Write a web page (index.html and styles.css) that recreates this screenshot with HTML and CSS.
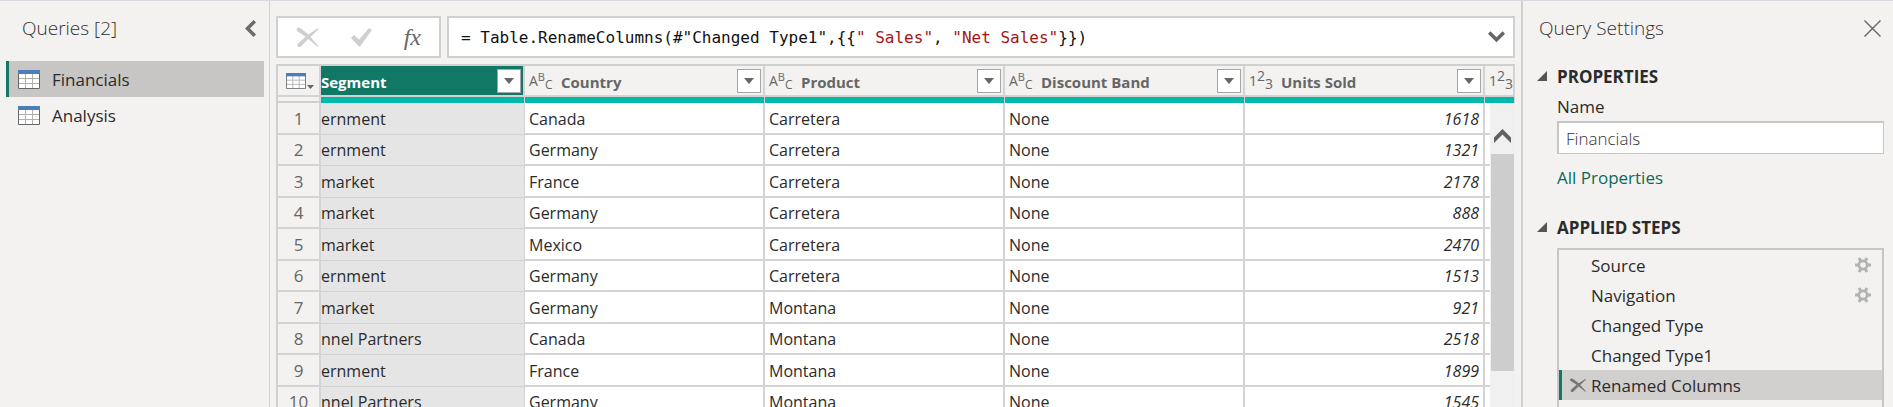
FILE: index.html
```html
<!DOCTYPE html>
<html lang="en">
<head>
<meta charset="utf-8">
<title>Query Editor</title>
<link rel="stylesheet" href="styles.css">
</head>
<body>
<svg class="defs" aria-hidden="true">
  <symbol id="grid" viewBox="0 0 22 19">
    <path fill="#fff" d="M0 0h22v19H0z"/>
    <path fill="none" stroke="#b0b0b0" d="M7.500 4v14M14.500 4v14M1 8.500h20M1 13.500h20"/>
    <path fill="none" stroke="#666" d="M.5 3v15.500h21V3"/>
    <path fill="#4a7ebb" d="M0 0h22v4H0z"/>
  </symbol>
  <symbol id="gear" viewBox="0 0 16 16">
    <path fill="none" stroke="#b3b3b3" stroke-width="3" d="M0 8h16M4 1l8 14M12 1L4 15"/>
    <circle cx="8" cy="8" r="5.500" fill="#b3b3b3"/>
    <circle cx="8" cy="8" r="2.800" fill="#f3f2f0"/>
  </symbol>
  <symbol id="brush-x" viewBox="0 0 22 20">
    <path d="M0 2.500C0 .5 3 0 4.500 1.500L12 7.500 21.500 1 22 2.300 14 10l8 9-1 .8L11.800 12 4.500 19.500C3 21 0 19.500 1 17L9 9.700 1 4.300C.3 3.800 0 3.200 0 2.500z"/>
  </symbol>
</svg>
<div class="app">
  <aside class="queries">
    <header class="pane-head">
      <h2 class="pane-title">Queries [2]</h2>
      <button class="icon-btn" aria-label="Collapse"><svg width="11" height="17" viewBox="0 0 11 17"><path fill="none" stroke="#6b6b6b" stroke-width="3.500" d="M9.800 1.200L2.500 8.500l7.300 7.300"/></svg></button>
    </header>
    <nav class="query-list">
      <button class="query selected"><svg width="22" height="19"><use href="#grid"/></svg>Financials</button>
      <button class="query"><svg width="22" height="19"><use href="#grid"/></svg>Analysis</button>
    </nav>
  </aside>

  <main class="editor">
    <div class="formula-bar">
      <div class="formula-tools">
        <button class="icon-btn" aria-label="Cancel"><svg width="23" height="20" viewBox="0 0 22 20" fill="#cfcfcf"><use href="#brush-x"/></svg></button>
        <button class="icon-btn" aria-label="Commit"><svg width="21" height="19" viewBox="0 0 21 19"><path fill="#cfcfcf" d="M0 10l3-3 5 4.500L18 0l3 2L9 18.500H8z"/></svg></button>
        <button class="icon-btn fx" aria-label="Insert step">fx</button>
      </div>
      <div class="formula">
        <code class="code">= Table.RenameColumns(#"Changed Type1",{{<span class="str">" Sales"</span>, <span class="str">"Net Sales"</span>}})</code>
        <button class="icon-btn" aria-label="Expand formula"><svg width="17" height="12" viewBox="0 0 17 12"><path fill="none" stroke="#666" stroke-width="3.500" d="M1.200 1.500l7.300 7.300 7.300-7.300"/></svg></button>
      </div>
    </div>

    <div class="grid">
      <table class="data">
        <colgroup><col class="c-num"><col class="c-seg"><col class="c-std"><col class="c-std"><col class="c-std"><col class="c-std"><col></colgroup>
        <thead>
          <tr class="heads">
            <th><button class="icon-btn corner" aria-label="Table menu"><svg width="20" height="16" viewBox="0 0 22 19" preserveAspectRatio="none"><use href="#grid"/></svg><svg width="7" height="4" viewBox="0 0 7 4"><path fill="#666" d="M0 0h7L3.500 4z"/></svg></button></th>
            <th class="seg"><div class="head"><span class="name">Segment</span><button class="filter" aria-label="Filter Segment"><svg width="10" height="6"><path fill="#666" d="M0 0h10L5 6z"/></svg></button></div></th>
            <th><div class="head"><span class="type">A<sup>B</sup><sub>C</sub></span><span class="name">Country</span><button class="filter" aria-label="Filter Country"><svg width="10" height="6"><path fill="#666" d="M0 0h10L5 6z"/></svg></button></div></th>
            <th><div class="head"><span class="type">A<sup>B</sup><sub>C</sub></span><span class="name">Product</span><button class="filter" aria-label="Filter Product"><svg width="10" height="6"><path fill="#666" d="M0 0h10L5 6z"/></svg></button></div></th>
            <th><div class="head"><span class="type">A<sup>B</sup><sub>C</sub></span><span class="name">Discount Band</span><button class="filter" aria-label="Filter Discount Band"><svg width="10" height="6"><path fill="#666" d="M0 0h10L5 6z"/></svg></button></div></th>
            <th><div class="head"><span class="type num">1<sup>2</sup><sub>3</sub></span><span class="name">Units Sold</span><button class="filter" aria-label="Filter Units Sold"><svg width="10" height="6"><path fill="#666" d="M0 0h10L5 6z"/></svg></button></div></th>
            <th><div class="head"><span class="type num">1<sup>2</sup><sub>3</sub></span></div></th>
          </tr>
          <tr class="quality"><td></td><td></td><td></td><td></td><td></td><td></td><td></td></tr>
        </thead>
        <tbody>
          <tr><th>1</th><td class="seg">ernment</td><td>Canada</td><td>Carretera</td><td>None</td><td class="int">1618</td><td></td></tr>
          <tr><th>2</th><td class="seg">ernment</td><td>Germany</td><td>Carretera</td><td>None</td><td class="int">1321</td><td></td></tr>
          <tr><th>3</th><td class="seg">market</td><td>France</td><td>Carretera</td><td>None</td><td class="int">2178</td><td></td></tr>
          <tr><th>4</th><td class="seg">market</td><td>Germany</td><td>Carretera</td><td>None</td><td class="int">888</td><td></td></tr>
          <tr><th>5</th><td class="seg">market</td><td>Mexico</td><td>Carretera</td><td>None</td><td class="int">2470</td><td></td></tr>
          <tr><th>6</th><td class="seg">ernment</td><td>Germany</td><td>Carretera</td><td>None</td><td class="int">1513</td><td></td></tr>
          <tr><th>7</th><td class="seg">market</td><td>Germany</td><td>Montana</td><td>None</td><td class="int">921</td><td></td></tr>
          <tr><th>8</th><td class="seg">nnel Partners</td><td>Canada</td><td>Montana</td><td>None</td><td class="int">2518</td><td></td></tr>
          <tr><th>9</th><td class="seg">ernment</td><td>France</td><td>Montana</td><td>None</td><td class="int">1899</td><td></td></tr>
          <tr><th>10</th><td class="seg">nnel Partners</td><td>Germany</td><td>Montana</td><td>None</td><td class="int">1545</td><td></td></tr>
        </tbody>
      </table>
      <div class="scrollbar">
        <button class="icon-btn" aria-label="Scroll up"><svg width="17" height="14" viewBox="0 0 17 14"><path fill="#606060" d="M0 8.500L8.500 0 17 8.500V14L8.500 5.500 0 14z"/></svg></button>
        <div class="thumb"></div>
      </div>
    </div>
  </main>

  <aside class="settings">
    <header class="pane-head">
      <h2 class="pane-title">Query Settings</h2>
      <button class="icon-btn" aria-label="Close"><svg width="17" height="17" viewBox="0 0 17 17"><path fill="none" stroke="#666" stroke-width="1.400" d="M.5.5l16 16M16.500.5l-16 16"/></svg></button>
    </header>
    <section class="section">
      <h3 class="section-title"><svg width="10" height="10"><path fill="#555" d="M10 0v10H0z"/></svg>PROPERTIES</h3>
      <div class="section-body">
        <label class="label" for="name">Name</label>
        <input class="input" id="name" value="Financials">
        <a class="link" href="#">All Properties</a>
      </div>
    </section>
    <section class="section">
      <h3 class="section-title"><svg width="10" height="10"><path fill="#555" d="M10 0v10H0z"/></svg>APPLIED STEPS</h3>
      <ol class="steps">
        <li class="step"><span class="step-name">Source</span><button class="icon-btn" aria-label="Edit Source"><svg width="16" height="16"><use href="#gear"/></svg></button></li>
        <li class="step"><span class="step-name">Navigation</span><button class="icon-btn" aria-label="Edit Navigation"><svg width="16" height="16"><use href="#gear"/></svg></button></li>
        <li class="step"><span class="step-name">Changed Type</span></li>
        <li class="step"><span class="step-name">Changed Type1</span></li>
        <li class="step selected"><button class="icon-btn" aria-label="Delete step"><svg width="16" height="14" viewBox="0 0 22 20" preserveAspectRatio="none" fill="#777"><use href="#brush-x"/></svg></button><span class="step-name">Renamed Columns</span></li>
      </ol>
    </section>
  </aside>
</div>
</body>
</html>
```
FILE: styles.css
```css
* { box-sizing: border-box; }
body {
  margin: 0;
  height: 100vh;
  overflow: hidden;
  background: #f3f2f0;
  color: #2b2b2b;
  font-family: "Open Sans", "Noto Sans", sans-serif;
  font-size: 17px;
}
h2, h3, ol { margin: 0; padding: 0; }
svg { display: block; flex: none; }
.defs { position: absolute; width: 0; height: 0; }
button, input { font: inherit; color: inherit; }
.icon-btn {
  display: flex;
  align-items: center;
  justify-content: center;
  padding: 0;
  border: 0;
  background: none;
}
.app {
  display: flex;
  height: 100%;
  border-top: 1px solid #d5d8dc;
}
.pane-head {
  display: flex;
  align-items: center;
  justify-content: space-between;
  height: 54px;
}
.pane-title {
  font-size: 19px;
  font-weight: 300;
  color: #333;
}

/* Queries pane */
.queries {
  flex: none;
  width: 270px;
  padding: 0 5px 0 6px;
  border-right: 1px solid #d0d0ce;
}
.queries .pane-head { padding: 0 8px 0 16px; }
.query-list { padding-top: 6px; }
.query {
  display: flex;
  align-items: center;
  gap: 12px;
  width: 100%;
  height: 36px;
  padding: 0 9px;
  border: 0;
  border-left: 3px solid transparent;
  background: none;
  text-align: left;
}
.query.selected { background: #c8c6c4; border-left-color: #117865; }

/* Editor */
.editor {
  display: flex;
  flex-direction: column;
  flex: 1;
  min-width: 0;
  gap: 6px;
  padding: 15px 6px 0;
}
.formula-bar { display: flex; flex: none; gap: 6px; height: 42px; }
.formula-tools, .formula {
  display: flex;
  align-items: center;
  border: 2px solid #d0d0ce;
  background: #fff;
}
.formula-tools { justify-content: space-between; width: 165px; padding: 0 18px; }
.fx {
  color: #666;
  font-family: "Liberation Serif", serif;
  font-size: 24px;
  font-style: italic;
  line-height: 24px;
}
.formula {
  flex: 1;
  min-width: 0;
  justify-content: space-between;
  padding: 0 8px 0 12px;
}
.code {
  color: #111;
  font-family: "DejaVu Sans Mono", "Liberation Mono", monospace;
  font-size: 16px;
  white-space: pre;
}
.str { color: #a31515; }

/* Data grid */
.grid {
  position: relative;
  flex: 1;
  min-height: 0;
  overflow: hidden;
  border-top: 2px solid #d0d0ce;
}
.data {
  width: 100%;
  table-layout: fixed;
  border-spacing: 0;
  font-size: 16px;
}
.c-num { width: 45px; }
.c-seg { width: 204px; }
.c-std { width: 240px; }
.data td, .data th {
  height: 32px;
  padding: 1px 4px 0;
  overflow: hidden;
  border-right: 2px solid #d3d3d3;
  border-bottom: 2px solid #d3d3d3;
  background: #fff;
  line-height: 20px;
  text-align: left;
  white-space: nowrap;
}
.data tbody tr:nth-child(even) > * { height: 31px; }
.data tr > :first-child {
  border-left: 2px solid #d0d0ce;
  background: #f3f2f0;
}
.data tbody th {
  padding: 1px 0 0;
  color: #666;
  font-size: 17px;
  font-weight: 400;
  text-align: center;
}
.data tbody .seg {
  padding: 0;
  border-right-width: 1px;
  border-bottom-width: 1px;
  background: #e5e5e5;
}
.data .int { font-style: italic; text-align: right; }
.data .heads th {
  height: 31px;
  padding: 0 2px 0 4px;
  background: #f3f2f0;
  color: #666;
}
.data .heads .seg { padding-left: 0; background: #117865; color: #fff; }
.data .heads th:first-child { padding: 0 0 0 4px; }
.corner { align-items: flex-end; gap: 1px; padding-left: 4px; }
.head { display: flex; align-items: center; }
.type { width: 32px; font-size: 14px; font-weight: 400; line-height: 20px; }
.type sup, .type sub { line-height: 0; }
.type sup { font-size: 11px; vertical-align: 5px; }
.type sub { font-size: 12px; vertical-align: -3px; }
.type.num sup, .type.num sub { font-size: 14px; }
.name { flex: 1; padding-top: 2px; font-size: 15px; font-weight: 700; }
.filter {
  display: flex;
  align-items: center;
  justify-content: center;
  width: 24px;
  height: 24px;
  padding: 0;
  border: 1px solid #a6a6a6;
  background: #fff;
}
.data .quality td {
  height: 6px;
  padding: 0;
  border-bottom: 0;
  border-right: 1px solid #d3d3d3;
  background: #01b8aa;
  line-height: 0;
}
.data .quality td:first-child {
  border-right-width: 2px;
  border-bottom: 2px solid #d0d0ce;
  background: #f3f2f0;
}
.scrollbar {
  position: absolute;
  top: 37px;
  right: 0;
  bottom: 0;
  width: 25px;
  padding: 26px 1px 0;
  background: #f0f0f0;
}
.scrollbar .icon-btn { width: 100%; }
.thumb { height: 217px; margin-top: 11px; background: #cdcdcd; }

/* Settings pane */
.settings {
  flex: none;
  width: 372px;
  padding: 0 9px 0 14px;
  border-left: 2px solid #d0d0ce;
}
.settings .pane-head { padding: 0 3px 0 2px; }
.section-title {
  display: flex;
  align-items: center;
  gap: 10px;
  height: 42px;
  font-size: 17px;
  font-weight: 700;
}
.section-body {
  display: flex;
  flex-direction: column;
  align-items: flex-start;
  padding-left: 20px;
}
.label { height: 24px; line-height: 20px; }
.input {
  width: 100%;
  height: 33px;
  padding: 0 7px;
  border: 1px solid #c8c6c4;
  border-width: 2px 1px 1px 2px;
  background: #fff;
  color: #333;
  font-weight: 300;
}
.link {
  padding: 12px 0 16px;
  color: #0b6a5a;
  line-height: 24px;
  text-decoration: none;
}
.steps {
  min-height: 180px;
  margin-left: 20px;
  border: 2px solid #c8c6c4;
  list-style: none;
}
.step {
  display: flex;
  align-items: center;
  height: 30px;
  padding: 0 11px 0 32px;
}
.step-name { flex: 1; }
.step.selected {
  gap: 5px;
  padding-left: 8px;
  border-left: 3px solid #117865;
  background: #d1d0ce;
}
```
